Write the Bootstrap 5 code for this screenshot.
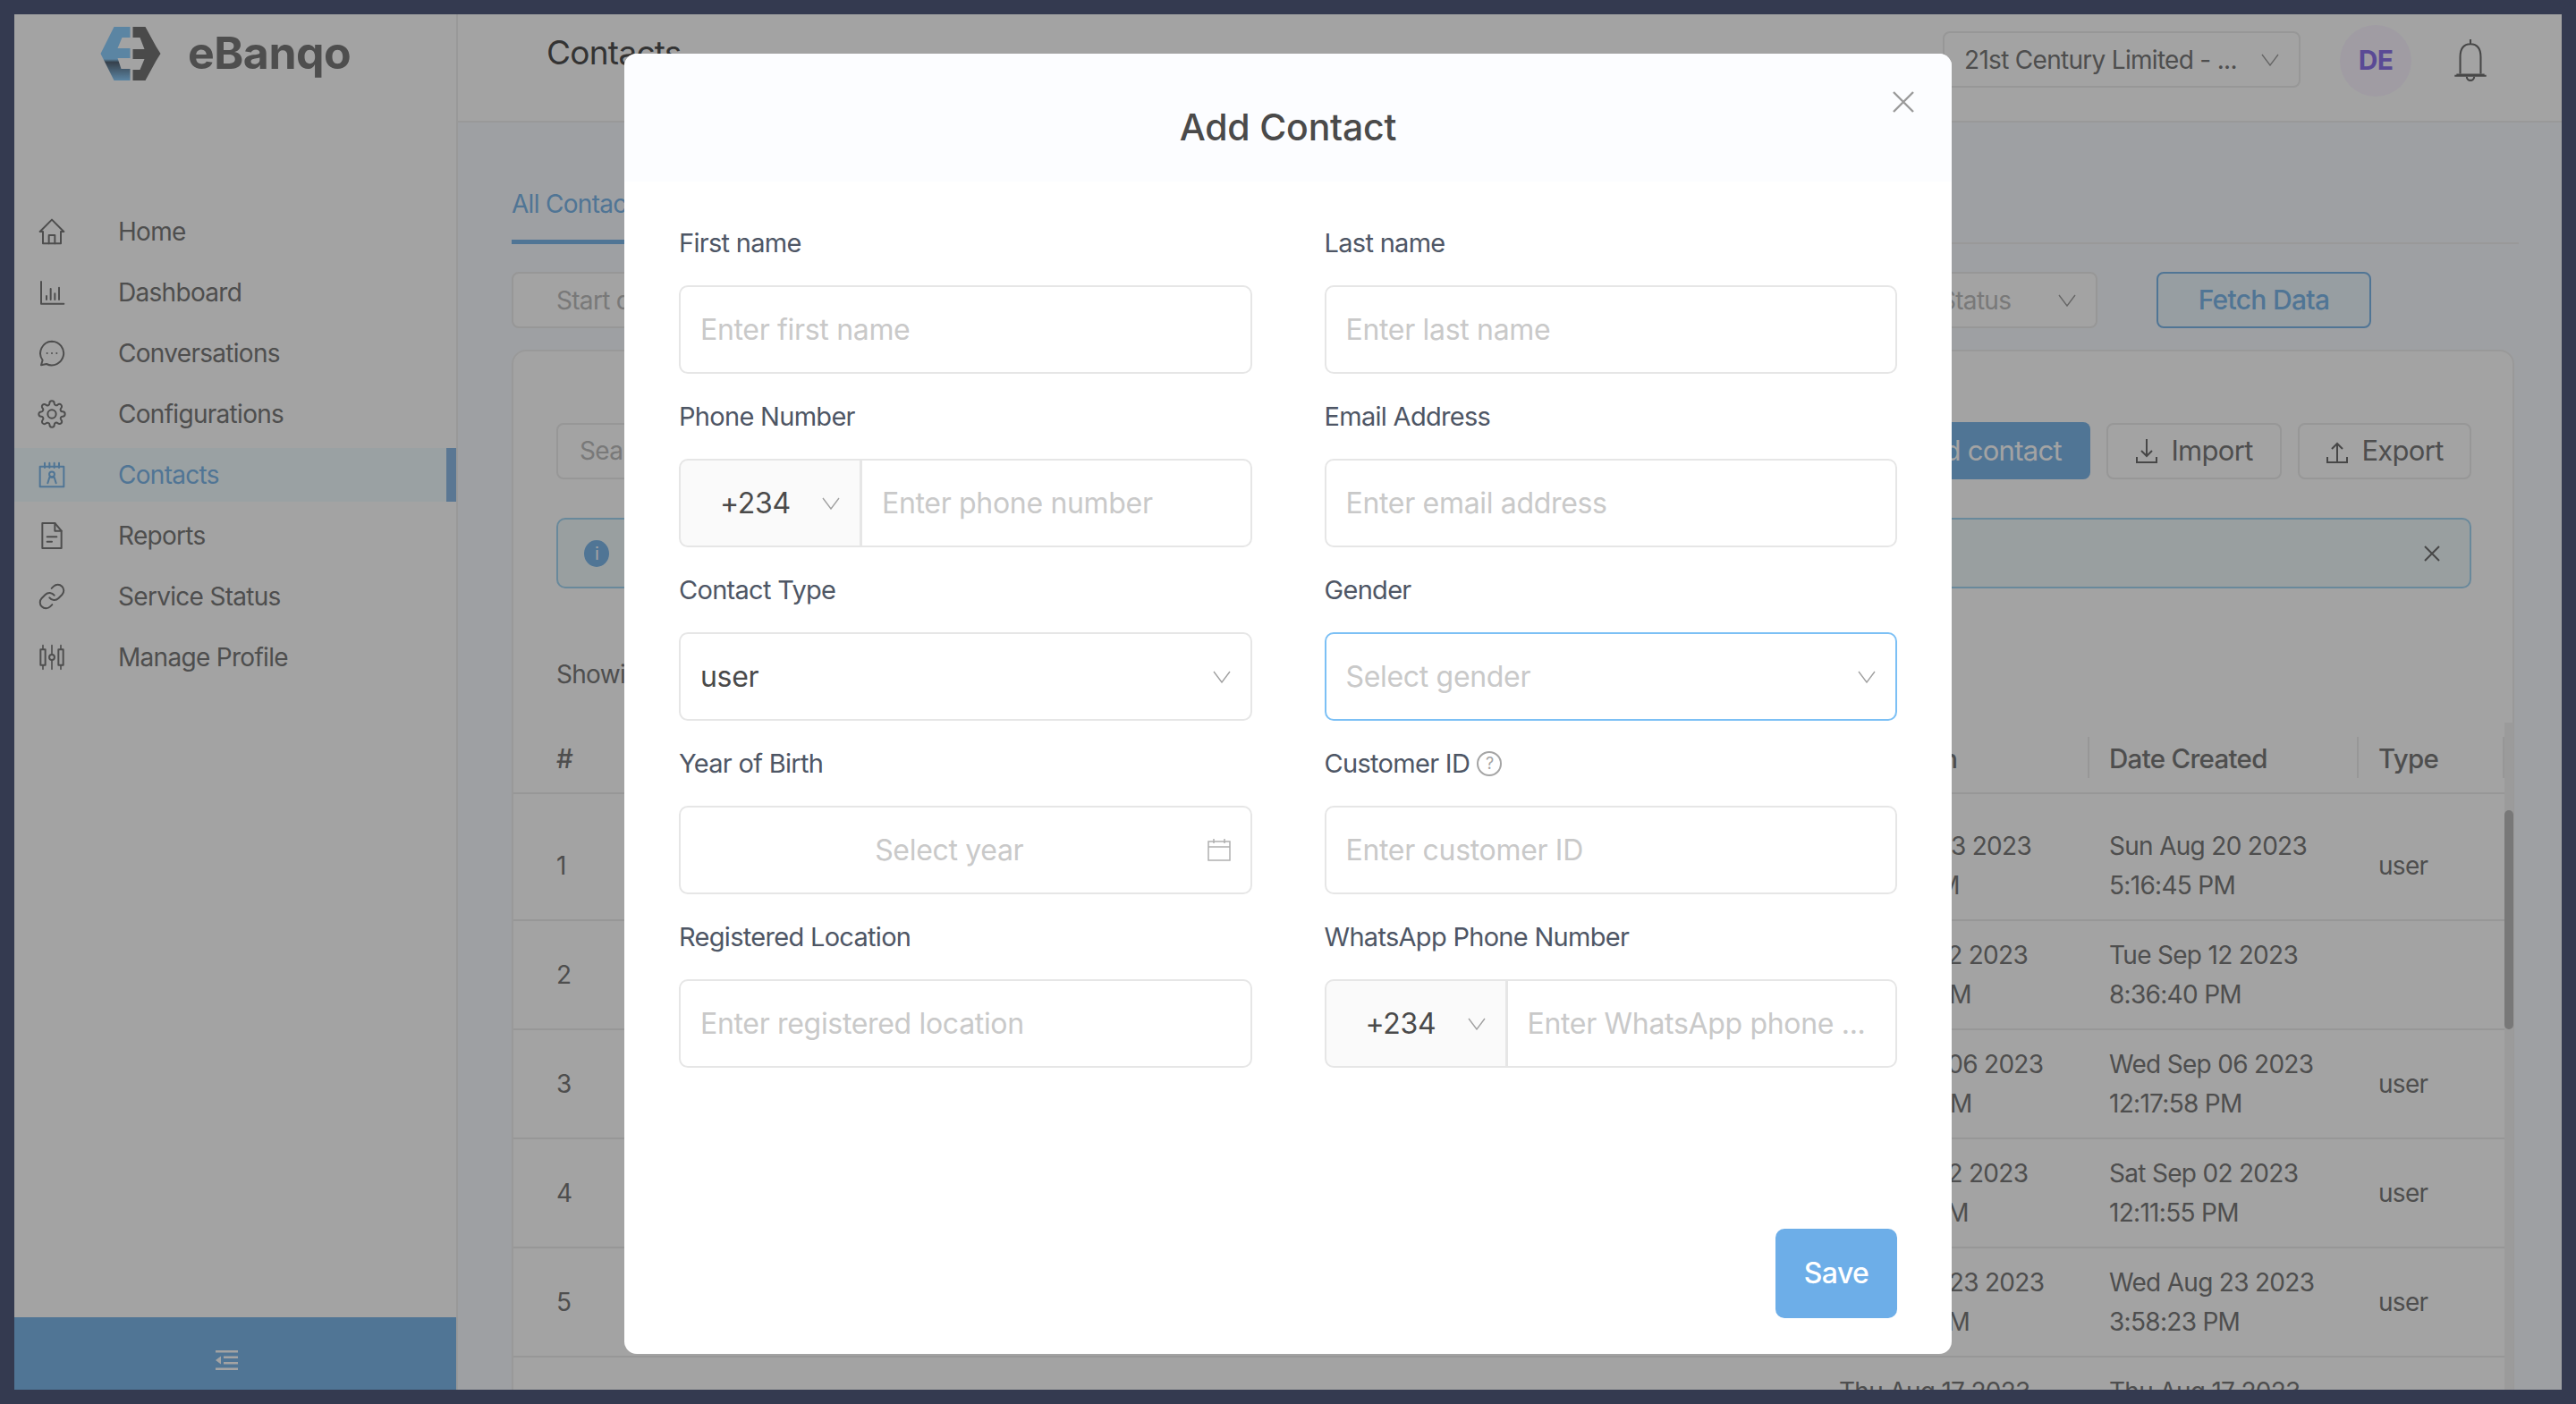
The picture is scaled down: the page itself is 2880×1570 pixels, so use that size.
<!DOCTYPE html>
<html lang="en">
<head>
    <meta charset="UTF-8">
    <meta name="viewport" content="width=device-width, initial-scale=1.0">
    <title>Contacts</title>
    <link href="https://cdn.jsdelivr.net/npm/bootstrap@5.3.0/dist/css/bootstrap.min.css" rel="stylesheet">
    <style>
        html, body { height: 100%; overflow: hidden; }
        body { background: #343a50; padding: 16px; font-family: "Inter", "Liberation Sans", sans-serif; font-size: 28px; letter-spacing: -.025em; color: #7b7b7b; }
        .app-frame { height: 1538px; background: #f8fbff; overflow: hidden; }

        /* sidebar */
        .side-bar { width: 496px; background: #fff; border-right: 2px solid #f0f0f0; }
        .side-logo { height: 121px; padding: 14px 0 0 96px; gap: 30px; }
        .side-logo svg { width: 68px; height: 60px; }
        .side-logo span { font-size: 50px; font-weight: 700; letter-spacing: -.01em; color: #7a7a7a; margin-top: -8px; }
        .side-nav { margin-top: 92px; }
        .side-link { height: 60px; margin-bottom: 8px; padding-left: 26px; gap: 58px; color: #7b7b7b; text-decoration: none; }
        .side-link svg { width: 32px; height: 32px; fill: none; stroke: currentColor; stroke-width: 1.5; stroke-linecap: round; stroke-linejoin: round; }
        .side-link.current { background: #f1fcff; color: #7db7ea; border-right: 11px solid #8dbbe6; }
        .side-toggle { height: 81px; background: #7db7ea; color: #fff; padding: 14px 20px 0 0; }

        /* top bar */
        .top-bar { height: 121px; padding: 0 82px 16px 99px; border-bottom: 2px solid #f0f0f0; background: #fff; }
        .top-bar h1 { font-size: 37px; font-weight: 400; color: #505050; margin: -16px 0 0; letter-spacing: -.02em; }
        .org-select { width: 400px; height: 63px; margin-top: -2px; font-size: 31.500px; padding-left: 22px; }
        .avatar-dot { width: 80px; height: 80px; margin: 0 46px 0 44px; border-radius: 50%; background: #faf5ff; color: #8e74ea; font-weight: 700; font-size: 30px; }
        .bell-icon { width: 40px; height: 50px; fill: none; stroke: #707070; stroke-width: 2; }

        /* page */
        .page-area { padding: 0 48px 0 60px; }
        .tab-row { height: 136px; border-bottom: 2px solid #f0f0f0; padding-top: 66px; }
        .tab-item { height: 70px; width: 340px; color: #7db7ea; border-bottom: 5px solid #7db7ea; padding-top: 4px; margin-bottom: -2px; }
        .filter-row { margin-top: 31px; height: 63px; padding-right: 165px; }
        .soft-input, .soft-btn { height: 63px; border: 2px solid #ececec; border-radius: 8px; background-color: #fff; font-size: 28px; letter-spacing: inherit; color: #7b7b7b; }
        .soft-input::placeholder { color: #bdbdbd; }
        .filter-row .soft-input { min-width: 0; }
        .filter-row input.soft-input { padding-left: 48px; }
        .form-select.status-select { flex: 0 0 300px; color: #bdbdbd; padding-left: 122px; }
        .fetch-btn { flex: 0 0 240px; height: 63px; margin-left: 66px; border: 2px solid #7db7ea; border-radius: 8px; background: #edf7fd; color: #7db7ea; font-size: 30px; font-weight: 500; letter-spacing: inherit; }
        .list-card { margin-top: 24px; margin-right: 5px; background: #fff; border: 2px solid #f0f0f0; border-radius: 16px 16px 0 0; padding-top: 79px; height: 1200px; }
        .tool-row { padding: 0 46px 0 48px; gap: 18px; }
        .tool-row input.soft-input { padding-left: 24px; min-width: 0; }
        .soft-btn { font-size: 31px; gap: 14px; display: flex; align-items: center; justify-content: center; padding: 0; }
        .soft-btn svg { width: 26px; height: 30px; fill: none; stroke: #707070; stroke-width: 2; }
        .import-btn { flex: 0 0 196px; }
        .export-btn { flex: 0 0 194px; }
        .add-btn { width: 600px; height: 64px; border: 0; border-radius: 8px; background: #7db7ea; color: #fff; font-size: 31px; text-align: right; padding: 0 32px; letter-spacing: inherit; }
        .note-box { margin: 43px 46px 0 48px; height: 79px; background: #eff9fb; border: 2px solid #a5d6f3; border-radius: 10px; padding: 0 33px 0 29px; }
        .info-dot { width: 28px; height: 30px; border-radius: 50%; background: #7db7ea; color: #fff; font-size: 20px; line-height: 30px; text-align: center; }
        .note-close { width: 18px; height: 18px; stroke: #707070; stroke-width: 2; fill: none; }
        .count-line { margin: 76px 48px 0; height: 40px; line-height: 40px; }
        .table-wrap { margin-top: 36px; position: relative; }
        .data-table { width: 2226px; table-layout: fixed; border-collapse: collapse; --bs-table-bg: transparent; --bs-table-color: #7b7b7b; margin: 0; }
        .data-table th { height: 77px; font-size: 29.500px; font-weight: 500; padding: 0 22px; position: relative; border-bottom: 2px solid #ececec; vertical-align: middle; }
        .data-table th::after { content: ""; position: absolute; right: 0; top: 14px; height: 46px; border-right: 2px solid #ececec; }
        .data-table td { height: 122px; padding: 0 22px; line-height: 44px; font-size: 28px; border-bottom: 2px solid #ececec; vertical-align: middle; }
        .data-table tbody tr:first-child td { height: 142px; padding-top: 20px; }
        .data-table th:first-child, .data-table td:first-child { padding-left: 48px; width: 1460px; }
        .col-seen { width: 302px; }
        .col-made { width: 301px; }
        .col-kind { width: 163px; }
        .scroll-track { position: absolute; top: -2px; left: 2226px; width: 10px; height: 800px; background: #f2f2f2; }
        .scroll-thumb { position: absolute; top: 98px; left: 0; width: 10px; height: 245px; border-radius: 5px; background: #bcbcbc; }

        /* modal */
        .dim-layer { position: absolute; inset: 0; width: auto; height: auto; z-index: 1050; --bs-backdrop-opacity: .36; }
        .contact-dialog { position: absolute; left: 682px; top: 44px; width: 1484px; height: 1454px; z-index: 1060; border: 0; border-radius: 14px; overflow: hidden; color: #4a4a4a; background: #fff; }
        .contact-dialog .modal-header { height: 143px; background: #fcfdff; border: 0; padding: 23px 0 0; }
        .contact-dialog .modal-title { font-size: 41px; font-weight: 500; letter-spacing: -.005em; color: #4a4a4a; }
        .x-close { right: 42px; top: 42px; width: 24px; height: 24px; stroke: #9a9a9a; stroke-width: 2.4; fill: none; }
        .contact-dialog .modal-body { padding: 49px 61px 0; flex: 0 0 auto; }
        .form-row { --bs-gutter-x: 81px; }
        .field-box { margin-bottom: 28px; }
        .field-box label { height: 40px; line-height: 40px; margin-bottom: 27px; font-size: 29px; color: #4e5665; display: flex; align-items: center; gap: 8px; }
        .field-input { height: 99px; font-size: 32px; letter-spacing: -.01em; color: #4a4a4a; padding: 0 22px; border: 2px solid #e6e6e6; border-radius: 10px; }
        .field-input::placeholder { color: #c9c9c9; }
        .form-select.field-input, .code-select, .form-select.org-select, .form-select.status-select { background-image: url("data:image/svg+xml,%3csvg xmlns='http://www.w3.org/2000/svg' viewBox='0 0 20 14'%3e%3cpath fill='none' stroke='%23a0a0a0' stroke-width='1.4' d='M1 1l9 12 9-12'/%3e%3c/svg%3e"); background-size: 20px 14px; background-position: right 22px center; }
        .select-empty { color: #c9c9c9; border-color: #7cc0f5 !important; }
        .code-select { flex: 0 0 204px !important; width: 204px !important; height: 99px; font-size: 32px; letter-spacing: -.01em; color: #4a4a4a; padding-left: 44px; background-color: #fafafa; border: 2px solid #e6e6e6; border-radius: 10px 0 0 10px; }
        .input-group > .field-input { border-radius: 0 10px 10px 0; margin-left: -2px; }
        .year-input { padding-right: 58px; }
        .year-icon { right: 24px; top: 36px; width: 26px; height: 26px; fill: none; stroke: #b0b0b0; stroke-width: 1.5; }
        .help-dot { width: 28px; height: 28px; border: 2px solid #a5a5a5; border-radius: 50%; font-size: 18px; line-height: 24px; text-align: center; color: #a5a5a5; }
        .contact-dialog .modal-footer { border: 0; padding: 0 61px 40px; margin-top: auto; }
        .save-btn { width: 136px; height: 100px; margin: 0; border: 0; border-radius: 10px; background: #6daee8; color: #fff; font-size: 32px; font-weight: 500; letter-spacing: -.02em; }
    </style>
</head>
<body>
<div class="app-frame d-flex position-relative">

    <!-- Sidebar -->
    <aside class="side-bar d-flex flex-column flex-shrink-0">
        <div class="side-logo d-flex align-items-start">
            <svg viewBox="0 0 67 60">
                <defs>
                    <linearGradient id="logoBlue" x1="0" y1="0" x2="0" y2="1">
                        <stop offset="0.6" stop-color="#8fd0ff"></stop>
                        <stop offset="0.66" stop-color="#567"></stop>
                        <stop offset="1" stop-color="#8fd0ff"></stop>
                    </linearGradient>
                </defs>
                <path fill="url(#logoBlue)" d="M15 0H33V12H24L19 24H33V35H19L23 47H33V60H15L0 30Z"></path>
                <path fill="#747474" d="M36 0H50L62 22L67 30L62 38L50 60H36V48H44L49 36H36V25H49L44 12H36Z"></path>
            </svg>
            <span>eBanqo</span>
        </div>
        <nav class="side-nav">
            <a class="side-link d-flex align-items-center" href="#">
                <svg viewBox="0 0 24 24"><path d="M12 2L2 12h2.500v10h15V12H22z"></path><path d="M9.500 22v-7h5v7"></path></svg>Home
            </a>
            <a class="side-link d-flex align-items-center" href="#">
                <svg viewBox="0 0 24 24"><path d="M3 3v18.500h19"></path><path d="M7.500 18v-3M11 18V9M14.500 18v-5M18 18V8"></path></svg>Dashboard
            </a>
            <a class="side-link d-flex align-items-center" href="#">
                <svg viewBox="0 0 24 24"><path d="M12 2a10 10 0 1 1-4.500 19L3 22l1.200-4.200A10 10 0 0 1 12 2z"></path><path d="M8 12h.01M12 12h.01M16 12h.01"></path></svg>Conversations
            </a>
            <a class="side-link d-flex align-items-center" href="#">
                <svg viewBox="0 0 24 24"><circle cx="12" cy="12" r="3.500"></circle><path d="M19.4 15a1.65 1.65 0 0 0 .33 1.82l.06.06a2 2 0 0 1 0 2.83 2 2 0 0 1-2.83 0l-.06-.06a1.65 1.65 0 0 0-1.82-.33 1.65 1.65 0 0 0-1 1.51V21a2 2 0 0 1-2 2 2 2 0 0 1-2-2v-.09A1.65 1.65 0 0 0 9 19.4a1.65 1.65 0 0 0-1.82.33l-.06.06a2 2 0 0 1-2.83 0 2 2 0 0 1 0-2.83l.06-.06a1.65 1.65 0 0 0 .33-1.82 1.65 1.65 0 0 0-1.51-1H3a2 2 0 0 1-2-2 2 2 0 0 1 2-2h.09A1.65 1.65 0 0 0 4.6 9a1.65 1.65 0 0 0-.33-1.82l-.06-.06a2 2 0 0 1 0-2.83 2 2 0 0 1 2.83 0l.06.06a1.65 1.65 0 0 0 1.82.33H9a1.65 1.65 0 0 0 1-1.51V3a2 2 0 0 1 2-2 2 2 0 0 1 2 2v.09a1.65 1.65 0 0 0 1 1.51 1.65 1.65 0 0 0 1.82-.33l.06-.06a2 2 0 0 1 2.83 0 2 2 0 0 1 0 2.83l-.06.06a1.65 1.65 0 0 0-.33 1.82V9a1.65 1.65 0 0 0 1.51 1H21a2 2 0 0 1 2 2 2 2 0 0 1-2 2h-.09a1.65 1.65 0 0 0-1.51 1z"></path></svg>Configurations
            </a>
            <a class="side-link current d-flex align-items-center" href="#">
                <svg viewBox="0 0 24 24"><path d="M2 5h20v17H2z"></path><path d="M6 2v4M10 2v4M14 2v4M18 2v4"></path><circle cx="12" cy="11.500" r="2.200"></circle><path d="M8.500 19l1.500-5h4l1.500 5"></path></svg>Contacts
            </a>
            <a class="side-link d-flex align-items-center" href="#">
                <svg viewBox="0 0 24 24"><path d="M4 1.500h10.500L20 8v14.500H4z"></path><path d="M14.500 1.500V8H20M8 13h8M8 17h4"></path></svg>Reports
            </a>
            <a class="side-link d-flex align-items-center" href="#">
                <svg viewBox="0 0 24 24"><path d="M10 13a5 5 0 0 0 7.54.54l3-3a5 5 0 0 0-7.07-7.07l-1.72 1.71"></path><path d="M14 11a5 5 0 0 0-7.54-.54l-3 3a5 5 0 0 0 7.07 7.07l1.71-1.71"></path></svg>Service Status
            </a>
            <a class="side-link d-flex align-items-center" href="#">
                <svg viewBox="0 0 24 24"><path d="M4.500 2v20M12 2v20M19.500 2v20" stroke-width="1.200"></path><path d="M2.500 5.500h4v13h-4zM17.500 5.500h4v13h-4z" fill="#fff"></path><circle cx="12" cy="12" r="2.200" fill="#fff"></circle></svg>Manage Profile
            </a>
        </nav>
        <div class="side-toggle d-flex align-items-center justify-content-center mt-auto">
            <svg width="26" height="24" viewBox="0 0 26 24" fill="currentColor"><path d="M1 1h25v2.500H1zM10 7.500h16V10H10zM10 14h16v2.500H10zM1 20.500h25V23H1zM7 7.500v9L1 12z"></path></svg>
        </div>
    </aside>

    <!-- Main -->
    <main class="flex-grow-1">
        <header class="top-bar d-flex align-items-center">
            <h1 class="me-auto">Contacts</h1>
            <select class="form-select soft-input org-select"><option>21st Century Limited - ...</option></select>
            <div class="avatar-dot d-flex align-items-center justify-content-center">DE</div>
            <svg class="bell-icon" viewBox="0 0 36 48"><path d="M18 1v5M7 38V20C7 11 11 6 18 6s11 5 11 14v18"></path><path d="M1 40h34M3 39h30"></path><path d="M14 41a4 4 0 0 0 8 0"></path></svg>
        </header>

        <div class="page-area">
            <div class="tab-row d-flex"><div class="tab-item">All Contacts</div></div>
            <div class="filter-row d-flex">
                <input class="form-control soft-input flex-grow-1" placeholder="Start date">
                <select class="form-select soft-input status-select"><option>Status</option></select>
                <button class="fetch-btn" type="button">Fetch Data</button>
            </div>

            <div class="list-card">
                <div class="tool-row d-flex align-items-center">
                    <input class="form-control soft-input" placeholder="Search contacts">
                    <button class="add-btn flex-shrink-0" type="button">Add contact</button>
                    <button class="soft-btn import-btn" type="button">
                        <svg viewBox="0 0 26 30"><path d="M13 2v19M7 15l6 6 6-6M2 22v6h22v-6"></path></svg>Import
                    </button>
                    <button class="soft-btn export-btn" type="button">
                        <svg viewBox="0 0 26 30"><path d="M13 28V8M7 13l6-6 6 6M2 22v6h22v-6"></path></svg>Export
                    </button>
                </div>
                <div class="note-box d-flex align-items-center justify-content-between">
                    <span class="info-dot">i</span>
                    <svg class="note-close" viewBox="0 0 18 18"><path d="M1 1l16 16M17 1L1 17"></path></svg>
                </div>
                <div class="count-line">Showing</div>
                <div class="table-wrap">
                    <table class="table data-table">
                        <thead>
                            <tr><th>#</th><th class="col-seen">Last Seen</th><th class="col-made">Date Created</th><th class="col-kind">Type</th></tr>
                        </thead>
                        <tbody>
                            <tr><td>1</td><td>Sun Aug 13 2023<br>5:02:11 PM</td><td>Sun Aug 20 2023<br>5:16:45 PM</td><td>user</td></tr>
                            <tr><td>2</td><td>Tue Sep 12 2023<br>8:36:40 PM</td><td>Tue Sep 12 2023<br>8:36:40 PM</td><td></td></tr>
                            <tr><td>3</td><td>Wed Sep 06 2023<br>12:17:58 PM</td><td>Wed Sep 06 2023<br>12:17:58 PM</td><td>user</td></tr>
                            <tr><td>4</td><td>Sat Sep 02 2023<br>12:11:55 PM</td><td>Sat Sep 02 2023<br>12:11:55 PM</td><td>user</td></tr>
                            <tr><td>5</td><td>Wed Aug 23 2023<br>3:58:23 PM</td><td>Wed Aug 23 2023<br>3:58:23 PM</td><td>user</td></tr>
                            <tr><td>6</td><td>Thu Aug 17 2023<br>9:41:08 AM</td><td>Thu Aug 17 2023<br>9:41:08 AM</td><td>user</td></tr>
                        </tbody>
                    </table>
                    <div class="scroll-track"><div class="scroll-thumb"></div></div>
                </div>
            </div>
        </div>
    </main>

    <!-- Add Contact modal -->
    <div class="modal-backdrop show dim-layer"></div>
    <div class="modal-content contact-dialog d-flex flex-column">
        <div class="modal-header justify-content-center position-relative">
            <h5 class="modal-title">Add Contact</h5>
            <svg class="x-close position-absolute" viewBox="0 0 24 24"><path d="M1 1l22 22M23 1L1 23"></path></svg>
        </div>
        <div class="modal-body">
            <div class="row form-row">
                <div class="col-6 field-box">
                    <label>First name</label>
                    <input class="form-control field-input" placeholder="Enter first name">
                </div>
                <div class="col-6 field-box">
                    <label>Last name</label>
                    <input class="form-control field-input" placeholder="Enter last name">
                </div>
                <div class="col-6 field-box">
                    <label>Phone Number</label>
                    <div class="input-group">
                        <select class="form-select code-select"><option>+234</option></select>
                        <input class="form-control field-input" placeholder="Enter phone number">
                    </div>
                </div>
                <div class="col-6 field-box">
                    <label>Email Address</label>
                    <input class="form-control field-input" placeholder="Enter email address">
                </div>
                <div class="col-6 field-box">
                    <label>Contact Type</label>
                    <select class="form-select field-input"><option>user</option></select>
                </div>
                <div class="col-6 field-box">
                    <label>Gender</label>
                    <select class="form-select field-input select-empty"><option>Select gender</option></select>
                </div>
                <div class="col-6 field-box">
                    <label>Year of Birth</label>
                    <div class="position-relative">
                        <input class="form-control field-input year-input text-center" placeholder="Select year">
                        <svg class="year-icon position-absolute" viewBox="0 0 26 26"><path d="M1 4h24v21H1zM1 10h24M7 1v5M19 1v5"></path></svg>
                    </div>
                </div>
                <div class="col-6 field-box">
                    <label>Customer ID <span class="help-dot">?</span></label>
                    <input class="form-control field-input" placeholder="Enter customer ID">
                </div>
                <div class="col-6 field-box">
                    <label>Registered Location</label>
                    <input class="form-control field-input" placeholder="Enter registered location">
                </div>
                <div class="col-6 field-box">
                    <label>WhatsApp Phone Number</label>
                    <div class="input-group">
                        <select class="form-select code-select"><option>+234</option></select>
                        <input class="form-control field-input" placeholder="Enter WhatsApp phone ...">
                    </div>
                </div>
            </div>
        </div>
        <div class="modal-footer">
            <button class="save-btn" type="button">Save</button>
        </div>
    </div>
</div>
<script src="https://cdn.jsdelivr.net/npm/bootstrap@5.3.0/dist/js/bootstrap.bundle.min.js"></script>
</body>
</html>
